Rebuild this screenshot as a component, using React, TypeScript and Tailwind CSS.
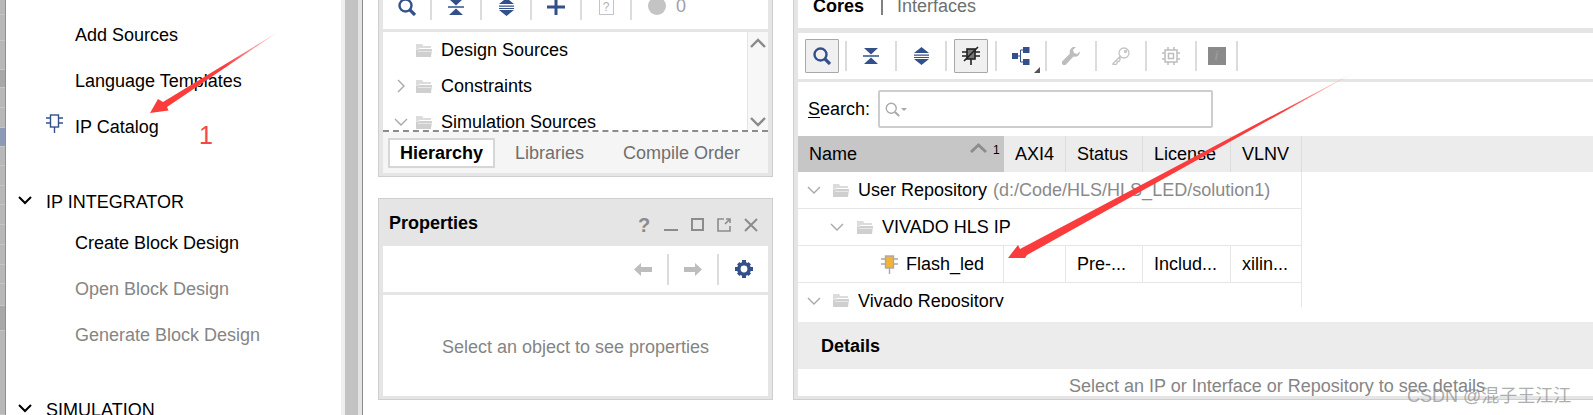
import React from 'react';

const font = { fontFamily: '"Liberation Sans", Arial, sans-serif' };

function Chevron({ open, className = '' }: { open?: boolean; className?: string }) {
  return (
    <svg width="14" height="14" viewBox="0 0 14 14" className={className} fill="none" stroke="currentColor" strokeWidth="1.4">
      {open ? <path d="M1 4l6 6 6-6" /> : <path d="M4 1l6 6-6 6" />}
    </svg>
  );
}

function Folder({ className = '' }: { className?: string }) {
  return (
    <svg width="16" height="15" viewBox="0 0 16 15" className={className}>
      <path d="M0 1h6l1.5 2H15v2H4L0 7z" fill="#dcdcdc" />
      <path d="M0 14V7l4-1h12l-1 8z" fill="#cfcfcf" />
      <path d="M2 8h13v1H2z" fill="#e8e8e8" />
    </svg>
  );
}

function IpIcon({ color, fill = 'none', className = '' }: { color: string; fill?: string; className?: string }) {
  return (
    <svg width="17" height="19" viewBox="0 0 17 19" className={className} fill="none" stroke={color} strokeWidth="1.4">
      <rect x="4.5" y="1" width="8" height="12" fill={fill} />
      <path d="M0 4h4.5M0 9h4.5M12.5 4H17M12.5 9H17M8.5 13v6" />
    </svg>
  );
}

function SearchIcon({ color = '#34508a', size = 18, width = 2.4 }: { color?: string; size?: number; width?: number }) {
  return (
    <svg width={size} height={size} viewBox="0 0 18 18" fill="none" stroke={color} strokeWidth={width}>
      <circle cx="7.5" cy="7.5" r="6" />
      <path d="M12 12l5 5" strokeWidth={width + 0.8} />
    </svg>
  );
}

function Collapse() {
  return (
    <svg width="16" height="16" viewBox="0 0 16 16" fill="#34508a">
      <path d="M1 0h14L8 6.5zM0 7.2h16v1.5H0zM1 16h14L8 9.5z" />
    </svg>
  );
}

function Expand() {
  return (
    <svg width="15" height="18" viewBox="0 0 15 18" fill="#34508a">
      <path d="M7.5 0L15 6H0zM0 7.5h15v1.3H0zM0 10h15v1H0zM0 12h15L7.5 18z" />
    </svg>
  );
}

function Sep({ children, w = 'w-[50px]', h = 'h-[30px]' }: { children?: React.ReactNode; w?: string; h?: string }) {
  return (
    <div className={`${w} ${h} flex items-center justify-center border-r-2 border-[#dcdcdc] shrink-0`}>{children}</div>
  );
}

const stripRows = [
  { h: 'h-[15px]', bg: 'bg-[#b8b8b8]' },
  { h: 'h-[26px]', bg: 'bg-[#b8b8b8]' },
  { h: 'h-[29px]', bg: 'bg-[#b8b8b8]' },
  { h: 'h-[18px]', bg: 'bg-[#a8a8a8]' },
  { h: 'h-[20px]', bg: 'bg-[#b8b8b8]' },
  { h: 'h-[20px]', bg: 'bg-[#b8b8b8]' },
  { h: 'h-[19px]', bg: 'bg-[#8d9ab8]' },
  { h: 'h-[19px]', bg: 'bg-[#b8b8b8]' },
  { h: 'h-[20px]', bg: 'bg-[#b8b8b8]' },
  { h: 'h-[19px]', bg: 'bg-[#b8b8b8]' },
  { h: 'h-[20px]', bg: 'bg-[#b8b8b8]' },
  { h: 'h-[20px]', bg: 'bg-[#b8b8b8]' },
  { h: 'h-[20px]', bg: 'bg-[#b8b8b8]' },
  { h: 'h-[19px]', bg: 'bg-[#b8b8b8]' },
  { h: 'h-[22px]', bg: 'bg-[#b8b8b8]' },
  { h: 'h-[25px]', bg: 'bg-[#a8a8a8]' },
  { h: 'h-[84px]', bg: 'bg-[#b8b8b8]' },
];

function NavItem({ label, dim, icon }: { label: string; dim?: boolean; icon?: boolean }) {
  return (
    <div className={`h-[46px] flex items-center pl-[69px] relative ${dim ? 'text-[#858585]' : 'text-black'}`}>
      {icon && (
        <span className="absolute left-[40px] top-[10px]">
          <IpIcon color="#34508a" />
        </span>
      )}
      {label}
    </div>
  );
}

function SectionTitle({ label, className = '' }: { label: string; className?: string }) {
  return (
    <div className={`h-[36px] flex items-center pl-[40px] relative text-black ${className}`}>
      <Chevron open className="absolute left-[12px] top-[9px] text-black [stroke-width:2]" />
      {label}
    </div>
  );
}

function SourceRow({ label, arrow }: { label: string; arrow?: 'open' | 'closed' }) {
  return (
    <div className="h-[36px] flex items-center shrink-0">
      <span className="w-[33px] flex justify-end pr-[8px] text-[#a8a8a8]">
        {arrow && <Chevron open={arrow === 'open'} />}
      </span>
      <Folder />
      <span className="ml-[9px] text-black">{label}</span>
    </div>
  );
}

function TreeRow({ pad, children, icon }: { pad: string; children: React.ReactNode; icon?: React.ReactNode }) {
  return (
    <div className={`h-[37px] shrink-0 flex items-center border-b border-[#e6e6e6] border-r ${pad}`}>
      {icon}
      {children}
    </div>
  );
}

export default function App() {
  return (
    <div className="relative h-[415px] w-[1593px] overflow-hidden bg-white flex text-[18px] leading-none" style={font}>
      {/* window behind, left edge */}
      <div className="w-[6px] shrink-0 flex flex-col border-r border-[#8f8f8f] overflow-hidden">
        {stripRows.map((r, i) => (
          <div key={i} className={`${r.h} ${r.bg} shrink-0 border-b border-[#c6c6c6]`} />
        ))}
      </div>

      {/* flow navigator */}
      <div className="w-[335px] shrink-0 pt-[12px]">
        <NavItem label="Add Sources" />
        <NavItem label="Language Templates" />
        <NavItem label="IP Catalog" icon />
        <SectionTitle label="IP INTEGRATOR" className="mt-[34px]" />
        <div>
          <NavItem label="Create Block Design" />
          <NavItem label="Open Block Design" dim />
          <NavItem label="Generate Block Design" dim />
        </div>
        <SectionTitle label="SIMULATION" className="mt-[34px]" />
      </div>

      {/* splitter */}
      <div className="w-[22px] shrink-0 flex">
        <div className="w-[4px] bg-[#efefef]" />
        <div className="w-[13px] bg-[#c3c3c3]" />
        <div className="w-[4px] bg-[#e4e4e4]" />
        <div className="w-[1px] bg-[#8c8c8c]" />
      </div>

      <div className="w-[15px] shrink-0" />

      {/* sources + properties */}
      <div className="w-[395px] shrink-0 flex flex-col">
        <div className="h-[177px] shrink-0 border-x border-b border-[#cfcfcf] bg-[#e5e5e5] px-[4px] pb-[3px] flex flex-col">
          <div className="h-[29px] bg-white flex items-start shrink-0">
            <Sep w="w-[49px]" h="h-[20px]"><span className="mb-[6px]"><SearchIcon /></span></Sep>
            <Sep h="h-[20px]"><span className="mb-[6px]"><Collapse /></span></Sep>
            <Sep h="h-[20px]"><span className="mb-[6px]"><Expand /></span></Sep>
            <Sep h="h-[20px]">
              <svg width="18" height="16" viewBox="0 0 18 16" fill="#34508a" className="mb-[6px]"><path d="M7.5 0h3v6.5H18v3h-7.5V16h-3V9.5H0v-3h7.5z" /></svg>
            </Sep>
            <Sep h="h-[20px]">
              <span className="mb-[6px] w-[15px] h-[16px] border border-[#c4c4c4] text-[#b0b0b0] text-[12px] flex items-center justify-center">?</span>
            </Sep>
            <span className="ml-[16px] -mt-[3px] w-[18px] h-[18px] rounded-full bg-[#c4c4c4]" />
            <span className="ml-[10px] -mt-[3px] text-[#a0a0a0] h-[18px]">0</span>
          </div>
          <div className="h-[3px] shrink-0" />
          <div className="h-[100px] shrink-0 bg-white flex border-b-2 border-dashed border-[#8c8c8c] overflow-hidden">
            <div className="flex-1 flex flex-col">
              <SourceRow label="Design Sources" />
              <SourceRow label="Constraints" arrow="closed" />
              <SourceRow label="Simulation Sources" arrow="open" />
            </div>
            <div className="w-[21px] bg-[#f7f7f7] border-l border-[#e6e6e6] flex flex-col items-center justify-between text-[#8a8a8a] pt-[6px] pb-[3px]">
              <svg width="16" height="10" viewBox="0 0 16 10" fill="none" stroke="currentColor" strokeWidth="2.4"><path d="M1 9l7-7 7 7" /></svg>
              <svg width="16" height="10" viewBox="0 0 16 10" fill="none" stroke="currentColor" strokeWidth="2.4"><path d="M1 1l7 7 7-7" /></svg>
            </div>
          </div>
          <div className="flex-1 bg-[#f5f5f5] flex items-center pl-[5px]">
            <span className="w-[107px] h-[30px] flex items-center justify-center bg-white border-2 border-[#d6d6d6] font-bold text-black">Hierarchy</span>
            <span className="ml-[20px] text-[#6f6f6f]">Libraries</span>
            <span className="ml-[39px] text-[#6f6f6f]">Compile Order</span>
          </div>
        </div>

        <div className="h-[202px] mt-[21px] shrink-0 border border-[#cfcfcf] bg-[#e5e5e5] px-[4px] pb-[3px] flex flex-col">
          <div className="h-[47px] shrink-0 flex items-center pl-[6px] relative">
            <span className="font-bold text-black mt-[1px]">Properties</span>
            <div className="ml-auto mr-[10px] mt-[4px] flex items-center gap-[13px] text-[#8c8c8c]">
              <span className="w-[14px] text-center font-bold text-[20px]">?</span>
              <span className="w-[14px] h-[2px] bg-[#8c8c8c] mt-[10px]" />
              <span className="w-[13px] h-[13px] border-2 border-[#8c8c8c]" />
              <svg width="14" height="14" viewBox="0 0 14 14" fill="none" stroke="#8c8c8c" strokeWidth="2"><path d="M7 1H1v12h12V8M8 6l5-5M9 1h4v4" strokeWidth="1.6" /></svg>
              <svg width="14" height="14" viewBox="0 0 14 14" fill="none" stroke="#8c8c8c" strokeWidth="2"><path d="M1 1l12 12M13 1L1 13" /></svg>
            </div>
          </div>
          <div className="h-[46px] shrink-0 bg-white flex items-center justify-end pr-[0px]">
            <Sep h="h-[31px]">
              <svg width="18" height="13" viewBox="0 0 18 13" fill="#bdbdbd"><path d="M0 6.5L7 0v4h11v5H7v4z" /></svg>
            </Sep>
            <Sep h="h-[31px]">
              <svg width="18" height="13" viewBox="0 0 18 13" fill="#bdbdbd"><path d="M18 6.5L11 0v4H0v5h11v4z" /></svg>
            </Sep>
            <div className="w-[49px] flex justify-center">
              <svg width="18" height="18" viewBox="0 0 18 18">
                <circle cx="9" cy="9" r="5.2" fill="none" stroke="#34508a" strokeWidth="3.6" />
                <path d="M9 9M7 0h4v3H7zM7 15h4v3H7zM0 7h3v4H0zM15 7h3v4h-3zM2 4.5L4.5 2l2 2L4 6.5zM13.5 2L16 4.5l-2 2L11.5 4zM2 13.5L4.5 16l2-2L4 11.5zM16 13.5L13.5 16l-2-2 2.5-2.5z" fill="#34508a" />
              </svg>
            </div>
          </div>
          <div className="h-[3px] shrink-0" />
          <div className="flex-1 bg-white flex items-center justify-center pt-[3px] text-[#858585]">Select an object to see properties</div>
        </div>
      </div>

      <div className="w-[20px] shrink-0" />

      {/* IP catalog */}
      <div className="flex-1 min-w-0 h-[400px] border-l border-b border-[#cfcfcf] bg-[#e5e5e5] pl-[4px] pb-[3px] flex flex-col">
        <div className="h-[28px] shrink-0 bg-white flex items-start pl-[15px]">
          <span className="font-bold text-black -mt-[3px] h-[18px]">Cores</span>
          <span className="ml-[17px] -mt-[3px] w-[2px] h-[18px] bg-[#808080]" />
          <span className="ml-[14px] -mt-[3px] h-[18px] text-[#6f6f6f]">Interfaces</span>
        </div>
        <div className="h-[5px] shrink-0" />
        <div className="h-[46px] shrink-0 bg-white flex items-center pl-[7px]">
          <Sep w="w-[42px]">
            <span className="w-[34px] h-[34px] mr-[6px] bg-[#f0f0f0] border border-[#a8a8a8] rounded-[1px] flex items-center justify-center shrink-0"><SearchIcon /></span>
          </Sep>
          <Sep><Collapse /></Sep>
          <Sep><Expand /></Sep>
          <Sep>
            <span className="w-[34px] h-[34px] bg-[#f0f0f0] border border-[#a8a8a8] rounded-[1px] flex items-center justify-center shrink-0">
              <svg width="20" height="20" viewBox="0 0 20 20" fill="none" stroke="#222" strokeWidth="1.6">
                <rect x="6" y="3" width="8" height="10" fill="#777" />
                <path d="M1 6h5M1 10h5M14 6h5M14 10h5M10 13v6M3 15L17 1" />
              </svg>
            </span>
          </Sep>
          <Sep>
            <span className="relative">
              <svg width="18" height="18" viewBox="0 0 18 18" fill="#34508a" stroke="#34508a">
                <rect x="0.5" y="6.5" width="5" height="5" />
                <rect x="11.5" y="0.5" width="5.5" height="5" />
                <rect x="11.5" y="12.5" width="5.5" height="5" />
                <path d="M5 9h3.500M8.500 3v12M8.500 3h3M8.500 15h3" fill="none" />
              </svg>
              <span className="absolute -right-[10px] -bottom-[8px] w-0 h-0 border-l-[6px] border-l-transparent border-b-[6px] border-b-[#555]" />
            </span>
          </Sep>
          <Sep>
            <svg width="18" height="18" viewBox="0 0 18 18" fill="#bdbdbd"><path d="M18 4.500a5 5 0 01-6.500 5L4 17.500a2 2 0 01-3.500-3.500L8 6.500A5 5 0 0114 0l-3 3 1 3 3 1z" /></svg>
          </Sep>
          <Sep>
            <svg width="18" height="18" viewBox="0 0 18 18" fill="none" stroke="#c4c4c4" strokeWidth="1.3"><circle cx="12" cy="6" r="5" /><path d="M8 9.500L1 16.500v1h3l1-1v-2h2l1-2z" /><circle cx="13.500" cy="4.500" r="1" /></svg>
          </Sep>
          <Sep>
            <svg width="18" height="18" viewBox="0 0 18 18" fill="none" stroke="#bdbdbd" strokeWidth="1.5"><rect x="3" y="3" width="12" height="12" /><rect x="6.500" y="6.500" width="5" height="5" /><path d="M6 0v3M12 0v3M6 15v3M12 15v3M0 6h3M0 12h3M15 6h3M15 12h3" /></svg>
          </Sep>
          <Sep w="w-[41px]">
            <span className="w-[18px] h-[18px] bg-[#8a8a8a] flex items-center justify-center text-[12px] italic font-bold text-[#9c9c9c] shrink-0">i</span>
          </Sep>
        </div>
        <div className="h-[3px] shrink-0" />

        <div className="h-[314px] shrink-0 bg-white flex flex-col">
          <div className="h-[54px] shrink-0 flex items-center pl-[10px]">
            <span className="w-[70px]"><span className="underline underline-offset-2">S</span>earch:</span>
            <div className="w-[335px] h-[38px] border-2 border-[#cdcdcd] rounded-[2px] flex items-center pl-[5px] gap-[1px]">
              <SearchIcon color="#a8a8a8" size={15} width={1.6} />
              <span className="w-0 h-0 border-x-[3px] border-x-transparent border-t-[3px] border-t-[#a8a8a8]" />
            </div>
          </div>

          <div className="h-[36px] shrink-0 flex bg-[#ececec] text-black">
            <div className="w-[206px] bg-[#c6c6c6] flex items-center pl-[11px] relative">
              Name
              <svg width="17" height="10" viewBox="0 0 17 10" fill="none" stroke="#8c8c8c" strokeWidth="2.8" className="absolute left-[172px] top-[7px]"><path d="M1 9l7.500-7 7.500 7" /></svg>
              <span className="absolute left-[195px] top-[8px] text-[12px]">1</span>
            </div>
            <div className="w-[62px] flex items-center pl-[11px] border-r border-[#dcdcdc]">AXI4</div>
            <div className="w-[77px] flex items-center pl-[11px] border-r border-[#dcdcdc]">Status</div>
            <div className="w-[88px] flex items-center pl-[11px] border-r border-[#dcdcdc]">License</div>
            <div className="w-[71px] flex items-center pl-[11px] border-r border-[#dcdcdc]">VLNV</div>
          </div>

          <div className="w-[504px] h-[135px] shrink-0 flex flex-col overflow-hidden border-[#e6e6e6]">
            <TreeRow pad="pl-[9px]" icon={<><Chevron open className="text-[#a8a8a8]" /><Folder className="ml-[12px]" /></>}>
              <span className="ml-[9px] text-black whitespace-nowrap">User Repository</span>
              <span className="ml-[6px] text-[#8a8a8a] whitespace-nowrap">(d:/Code/HLS/HLS_LED/solution1)</span>
            </TreeRow>
            <TreeRow pad="pl-[32px]" icon={<><Chevron open className="text-[#a8a8a8]" /><Folder className="ml-[13px]" /></>}>
              <span className="ml-[9px] text-black whitespace-nowrap">VIVADO HLS IP</span>
            </TreeRow>
            <div className="h-[37px] shrink-0 flex border-b border-r border-[#e6e6e6] text-black">
              <div className="w-[206px] flex items-center pl-[83px] border-r border-[#e6e6e6]">
                <IpIcon color="#a8a8a8" fill="#f5b335" />
                <span className="ml-[8px]">Flash_led</span>
              </div>
              <div className="w-[62px] border-r border-[#e6e6e6]" />
              <div className="w-[77px] flex items-center pl-[11px] border-r border-[#e6e6e6]">Pre-...</div>
              <div className="w-[88px] flex items-center pl-[11px] border-r border-[#e6e6e6]">Includ...</div>
              <div className="flex items-center pl-[11px]">xilin...</div>
            </div>
            <div className="h-[37px] shrink-0 flex items-center pl-[9px] border-r border-[#e6e6e6] -mt-[1px]">
              <Chevron open className="text-[#a8a8a8]" />
              <Folder className="ml-[12px]" />
              <span className="ml-[9px] text-black whitespace-nowrap">Vivado Repository</span>
            </div>
          </div>

          <div className="h-[15px] shrink-0" />
          <div className="h-[47px] shrink-0 bg-[#ececec] flex items-center pl-[23px] font-bold text-black">Details</div>
          <div className="flex-1 overflow-hidden pl-[271px] pt-[8px] text-[#858585] whitespace-nowrap">Select an IP or Interface or Repository to see details</div>
        </div>
      </div>

      {/* annotations drawn on top of the screenshot */}
      <svg className="absolute left-0 top-0 pointer-events-none" width="1593" height="415" viewBox="0 0 1593 415">
        <defs>
          <linearGradient id="fade1" gradientUnits="userSpaceOnUse" x1="278" y1="32" x2="225" y2="65">
            <stop offset="0" stopColor="#ff3b3b" stopOpacity="0.15" />
            <stop offset="1" stopColor="#fa3c3c" />
          </linearGradient>
          <linearGradient id="fade2" gradientUnits="userSpaceOnUse" x1="1355" y1="72" x2="1280" y2="112">
            <stop offset="0" stopColor="#ff3b3b" stopOpacity="0.15" />
            <stop offset="1" stopColor="#fa3c3c" />
          </linearGradient>
        </defs>
        <path d="M278 32L163 102 158 99 150 113 168.500 110.500 167 107z" fill="url(#fade1)" />
        <path d="M1355 72L1020 249 1018 245 1008 258 1025 258 1027 255z" fill="url(#fade2)" />
      </svg>
      <span className="absolute left-[199px] top-[123px] text-[25px] leading-[25px] text-[#f44848]">1</span>
      <span
        className="absolute left-[1407px] top-[387px] text-[18px] leading-[18px] text-[#8a8a8a]/70 whitespace-nowrap"
        style={{ fontFamily: '"Liberation Sans", "Noto Sans CJK SC", sans-serif' }}
      >
        CSDN @混子王江江
      </span>
    </div>
  );
}
